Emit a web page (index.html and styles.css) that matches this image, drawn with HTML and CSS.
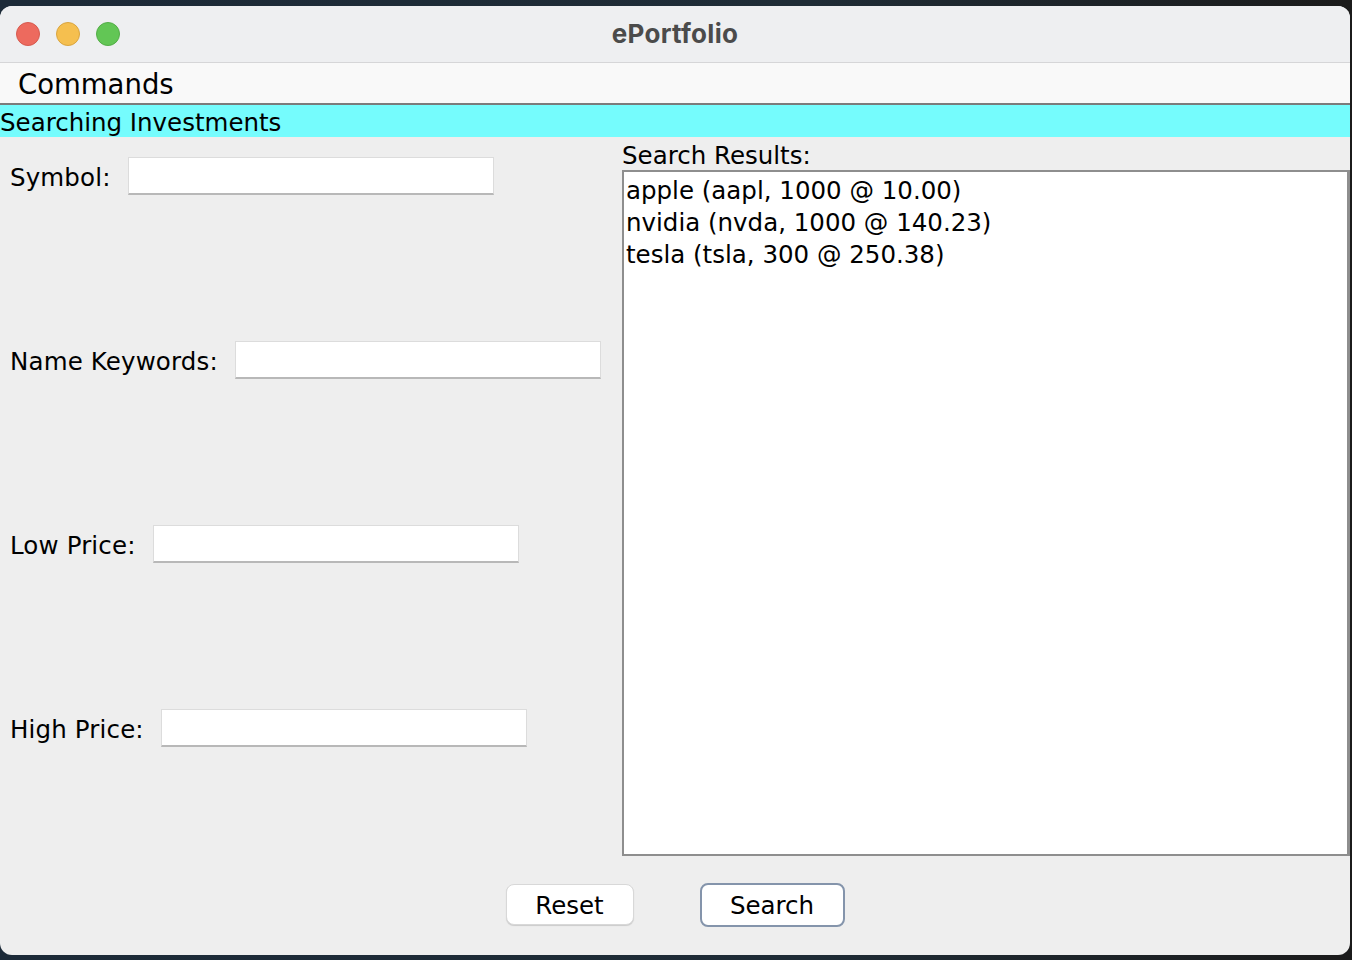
FILE: index.html
```html
<!DOCTYPE html>
<html>
<head>
<meta charset="utf-8">
<link rel="stylesheet" href="styles.css">
</head>
<body>
<div class="window">
  <div class="titlebar">
    <div class="lights">
      <span class="light red"></span>
      <span class="light yellow"></span>
      <span class="light green"></span>
    </div>
    <div class="title">ePortfolio</div>
  </div>
  <div class="menubar"><span class="menu">Commands</span></div>
  <div class="section-title">Searching Investments</div>
  <div class="content">
    <div class="form">
      <div class="row"><label>Symbol:</label><div class="field"></div></div>
      <div class="row"><label>Name Keywords:</label><div class="field"></div></div>
      <div class="row"><label>Low Price:</label><div class="field"></div></div>
      <div class="row"><label>High Price:</label><div class="field"></div></div>
    </div>
    <div class="results">
      <div class="results-label">Search Results:</div>
      <div class="results-box">
        <div class="line">apple (aapl, 1000 @ 10.00)</div>
        <div class="line">nvidia (nvda, 1000 @ 140.23)</div>
        <div class="line">tesla (tsla, 300 @ 250.38)</div>
      </div>
    </div>
  </div>
  <div class="buttons">
    <div class="btn">Reset</div>
    <div class="btn default">Search</div>
  </div>
</div>
</body>
</html>
```

FILE: styles.css
```css
html, body {
  margin: 0;
  padding: 0;
}
body {
  width: 1352px;
  height: 960px;
  background: linear-gradient(to right, #1c2a38 0%, #1f2c36 60%, #1b1b1b 100%);
  font-family: "DejaVu Sans", sans-serif;
  color: #000;
  padding-top: 6px;
  box-sizing: border-box;
  overflow: hidden;
}
.window {
  width: 1350px;
  height: 949px;
  background: #eeeeee;
  border-radius: 12px;
  overflow: hidden;
  display: flex;
  flex-direction: column;
}
.titlebar {
  height: 56px;
  background: #eeeff1;
  border-bottom: 1px solid #d6d6d8;
  display: flex;
  align-items: center;
  position: relative;
  flex-shrink: 0;
}
.lights {
  display: flex;
  gap: 16px;
  padding-left: 16px;
}
.light {
  width: 24px;
  height: 24px;
  border-radius: 50%;
  box-sizing: border-box;
}
.red { background: #ed6a5e; border: 1px solid #d65a4f; }
.yellow { background: #f5bf4f; border: 1px solid #d9a540; }
.green { background: #62c655; border: 1px solid #53ad47; }
.title {
  position: absolute;
  left: 0;
  right: 0;
  top: 12px;
  text-align: center;
  font-family: "Inter", "Open Sans", sans-serif;
  font-weight: 700;
  font-size: 26px;
  line-height: 32px;
  color: #4b4b4b;
  letter-spacing: 0.3px;
}
.menubar {
  height: 40px;
  background: #f9f9f9;
  border-bottom: 2px solid #7b7b7b;
  display: flex;
  align-items: center;
  flex-shrink: 0;
}
.menu {
  padding-left: 18px;
  padding-top: 2px;
  font-size: 27.5px;
}
.section-title {
  height: 32px;
  background: #75fcfd;
  font-size: 24.5px;
  line-height: 36px;
  flex-shrink: 0;
  white-space: nowrap;
}
.content {
  display: flex;
  flex-shrink: 0;
}
.form {
  width: 612px;
  padding-left: 10px;
  padding-top: 20px;
  box-sizing: border-box;
  display: flex;
  flex-direction: column;
  gap: 146px;
}
.row {
  display: flex;
  align-items: center;
  gap: 17px;
  height: 38px;
}
.row label {
  font-size: 24.5px;
  letter-spacing: 0.15px;
  white-space: nowrap;
  padding-top: 2px;
}
.field {
  width: 366px;
  height: 38px;
  background: #fff;
  box-sizing: border-box;
  border: 1px solid #dcdcdc;
  border-bottom: 2px solid #b8b8b8;
}
.results {
  width: 728px;
  margin-left: 10px;
  display: flex;
  flex-direction: column;
}
.results-label {
  height: 33px;
  line-height: 37px;
  font-size: 24.5px;
  white-space: nowrap;
}
.results-box {
  height: 686px;
  background: #fff;
  box-sizing: border-box;
  border: 2px solid #8e8e8e;
  border-right-width: 3px;
  padding-top: 3px;
  padding-left: 2px;
}
.line {
  height: 32px;
  line-height: 32px;
  font-size: 24.5px;
  white-space: nowrap;
}
.buttons {
  flex: 1;
  display: flex;
  justify-content: center;
  align-items: center;
  gap: 66px;
  padding-bottom: 2px;
}
.btn {
  width: 128px;
  height: 41px;
  box-sizing: border-box;
  background: #fff;
  border-radius: 8px;
  border: 1px solid #d8d8d8;
  box-shadow: 0 1px 1px rgba(0,0,0,0.15);
  font-size: 24.5px;
  padding-top: 2px;
  display: flex;
  align-items: center;
  justify-content: center;
}
.btn.default {
  width: 145px;
  height: 44px;
  border: 2px solid #8494ab;
  box-shadow: none;
}
```
